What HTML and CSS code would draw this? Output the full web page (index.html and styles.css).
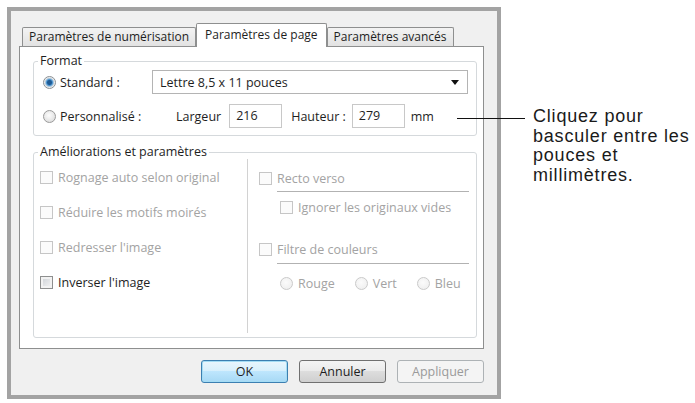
FILE: index.html
```html
<!DOCTYPE html>
<html lang="fr">
<head>
    <meta charset="UTF-8">
    <link rel="stylesheet" href="styles.css">
    <title>Paramètres de page</title>
</head>
<body>

<div class="page">
    <div class="dialog">
        <div class="tabs">
            <div class="tab">Paramètres de numérisation</div>
            <div class="tab active">Paramètres de page</div>
            <div class="tab">Paramètres avancés</div>
        </div>

        <div class="panel">
            <fieldset class="group">
                <legend>Format</legend>
                <div class="format-body">
                    <div class="row">
                        <span class="radio checked"></span>
                        <span class="opt-label">Standard :</span>
                        <div class="select">
                            <span>Lettre 8,5 x 11 pouces</span>
                            <span class="arrow"></span>
                        </div>
                    </div>
                    <div class="row row-custom">
                        <span class="radio"></span>
                        <span class="opt-label">Personnalisé :</span>
                        <span class="size-label">Largeur</span>
                        <span class="field">216</span>
                        <span class="size-label">Hauteur :</span>
                        <span class="field">279</span>
                        <span class="unit">mm</span>
                    </div>
                </div>
            </fieldset>

            <fieldset class="group group-options">
                <legend>Améliorations et paramètres</legend>
                <div class="cols">
                    <div class="col-left">
                        <div class="check disabled"><span class="box"></span>Rognage auto selon original</div>
                        <div class="check disabled"><span class="box"></span>Réduire les motifs moirés</div>
                        <div class="check disabled"><span class="box"></span>Redresser l'image</div>
                        <div class="check"><span class="box"></span>Inverser l'image</div>
                    </div>
                    <div class="col-right">
                        <div class="check disabled"><span class="box"></span>Recto verso</div>
                        <div class="sep"></div>
                        <div class="check disabled sub"><span class="box"></span>Ignorer les originaux vides</div>
                        <div class="check disabled filter"><span class="box"></span>Filtre de couleurs</div>
                        <div class="sep sep-filter"></div>
                        <div class="colors">
                            <div class="check disabled"><span class="radio off"></span>Rouge</div>
                            <div class="check disabled"><span class="radio off"></span>Vert</div>
                            <div class="check disabled"><span class="radio off"></span>Bleu</div>
                        </div>
                    </div>
                </div>
            </fieldset>
        </div>

        <div class="buttons">
            <button class="btn default">OK</button>
            <button class="btn">Annuler</button>
            <button class="btn disabled">Appliquer</button>
        </div>
    </div>

    <div class="callout">
        <span class="callout-line"></span>
        <p class="callout-text">Cliquez pour<br>basculer entre les<br>pouces et<br>millimètres.</p>
    </div>
</div>

</body>
</html>
```

FILE: styles.css
```css
body {
    margin: 0;
    background: #fff;
    font-family: "Open Sans", sans-serif;
    font-size: 12.5px;
    color: #1e1e1e;
}

.page {
    display: flex;
    align-items: flex-start;
}

.dialog {
    box-sizing: border-box;
    flex-shrink: 0;
    width: 494px;
    height: 392px;
    margin: 7px 0 0 7px;
    padding: 12px 13px 12px 8px;
    border: 4px solid #a3a3a3;
    background: #f0f0f0;
    display: flex;
    flex-direction: column;
}

/* tabs */
.tabs {
    position: relative;
    z-index: 1;
    display: flex;
    align-items: flex-end;
    height: 24px;
    margin: 0 0 -1px 3px;
}

.tab {
    box-sizing: border-box;
    height: 19px;
    margin-bottom: 1px;
    padding: 0 6px;
    border: 1px solid #8e8f8f;
    border-bottom: none;
    border-radius: 2px 2px 0 0;
    background: linear-gradient(#f3f3f3, #e2e2e2);
    font-size: 12px;
    line-height: 17px;
}

.tab.active {
    height: 24px;
    margin-bottom: 0;
    padding: 0 8px;
    background: #fff;
    line-height: 21px;
}

.panel {
    box-sizing: border-box;
    height: 303px;
    padding: 7px 6px 0 13px;
    border: 1px solid #8e8f8f;
    background: #fff;
}

/* group boxes */
.group {
    margin: 0;
    padding: 0;
    border: 1px solid #d5d9dc;
    border-radius: 3px;
}

.group legend {
    margin-left: 4px;
    padding: 0 2px;
    line-height: 14px;
}

.format-body {
    padding: 2px 8px 7px 9px;
}

.row {
    display: flex;
    align-items: center;
    height: 24px;
}

.row-custom {
    margin-top: 10px;
}

.opt-label {
    width: 92px;
    margin-left: 4px;
}

.select {
    box-sizing: border-box;
    flex: 1;
    height: 24px;
    padding: 0 8px 0 7px;
    border: 1px solid #b4b4b4;
    background: #fff;
    display: flex;
    align-items: center;
    justify-content: space-between;
}

.arrow {
    width: 0;
    height: 0;
    border-left: 4px solid transparent;
    border-right: 4px solid transparent;
    border-top: 5px solid #111;
}

.size-label {
    margin: 0 8px 0 24px;
}

.size-label + .field + .size-label {
    margin: 0 6px 0 9px;
}

.field {
    box-sizing: border-box;
    width: 53px;
    height: 24px;
    padding-left: 6px;
    border: 1px solid #c8c8c8;
    line-height: 22px;
}

.unit {
    margin-left: 6px;
}

.radio {
    box-sizing: border-box;
    flex-shrink: 0;
    width: 13px;
    height: 13px;
    border: 1px solid #9a9a9a;
    border-radius: 50%;
    background: radial-gradient(circle at 45% 40%, #fdfdfd, #d6d6d6);
}

.radio.checked {
    border-color: #8a8f94;
    background: radial-gradient(circle, #1e5a94 0 2px, #4b94d0 3px, #a9c6dc 4px, #eaeaea 5px, #fafafa 6px);
}

.radio.off {
    border-color: #cacaca;
    background: radial-gradient(circle at 45% 40%, #fbfbfb, #ececec);
}

/* enhancements */
.group-options {
    margin-top: 9px;
    padding-bottom: 4px;
}

.cols {
    display: flex;
    height: 174px;
}

.col-left {
    width: 207px;
    padding: 10px 0 0 6px;
}

.col-right {
    flex: 1;
    padding: 11px 7px 0 11px;
    border-left: 1px solid #d2d2d2;
}

.check {
    display: flex;
    align-items: center;
    gap: 5px;
    height: 16px;
}

.col-left .check {
    margin-bottom: 19px;
}

.check.disabled {
    color: #a3a3a3;
}

.box {
    box-sizing: border-box;
    flex-shrink: 0;
    width: 13px;
    height: 13px;
    border: 1px solid #8e8f8f;
    background: linear-gradient(135deg, #cbcfd4, #f6f6f6);
    box-shadow: inset 0 0 0 2px #f2f2f2;
}

.disabled .box {
    border-color: #c6c6c6;
    background: #fbfbfb;
    box-shadow: none;
}

.sep {
    height: 1px;
    margin: 5px 0 7px 18px;
    background: #b2b2b2;
}

.check.sub {
    margin-left: 21px;
}

.check.filter {
    margin-top: 26px;
}

.sep-filter {
    margin: 6px 0 11px 18px;
}

.colors {
    display: flex;
    gap: 20px;
    margin-left: 21px;
}

/* buttons */
.buttons {
    display: flex;
    justify-content: flex-end;
    gap: 11px;
    margin-top: 11px;
}

.btn {
    box-sizing: border-box;
    width: 87px;
    height: 23px;
    padding: 0;
    border: 1px solid #707070;
    border-radius: 3px;
    background: linear-gradient(#f4f4f4 0, #ebebeb 45%, #dddddd 50%, #cfcfcf 100%);
    font: inherit;
    color: #1e1e1e;
}

.btn.default {
    border-color: #3c7fb1;
    background: linear-gradient(#eaf6fd 0, #d9f0fc 45%, #bee6fd 50%, #a7d9f5 100%);
    box-shadow: inset 0 0 0 1px #a4dcf4;
}

.btn.disabled {
    border-color: #adb2b5;
    background: #f4f4f4;
    color: #9a9a9a;
}

/* annotation */
.callout {
    display: flex;
    align-items: flex-start;
    margin: 107px 0 0 -44px;
}

.callout-line {
    width: 68px;
    height: 1px;
    margin: 11px 8px 0 0;
    background: #111;
}

.callout-text {
    margin: 0;
    font-family: "Liberation Sans", Arial, sans-serif;
    font-size: 18px;
    letter-spacing: 0.8px;
    line-height: 19.5px;
    color: #1a1a1a;
    white-space: nowrap;
}
```
